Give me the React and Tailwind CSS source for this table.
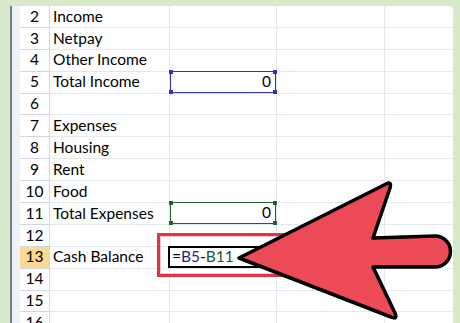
import React from 'react'

const rows = [
  { n: 2, label: 'Income' },
  { n: 3, label: 'Netpay' },
  { n: 4, label: 'Other Income' },
  { n: 5, label: 'Total Income', value: '0', sel: 'blue' },
  { n: 6, label: '' },
  { n: 7, label: 'Expenses' },
  { n: 8, label: 'Housing' },
  { n: 9, label: 'Rent' },
  { n: 10, label: 'Food' },
  { n: 11, label: 'Total Expenses', value: '0', sel: 'green' },
  { n: 12, label: '' },
  { n: 13, label: 'Cash Balance', edit: true },
  { n: 14, label: '' },
  { n: 15, label: '' },
  { n: 16, label: '' },
]

function Handles({ color }) {
  return (
    <>
      <span className={`absolute -left-[2px] -top-[2px] h-[4px] w-[4px] ${color}`} />
      <span className={`absolute -right-[2px] -top-[2px] h-[4px] w-[4px] ${color}`} />
      <span className={`absolute -left-[2px] -bottom-[2px] h-[4px] w-[4px] ${color}`} />
      <span className={`absolute -right-[2px] -bottom-[2px] h-[4px] w-[4px] ${color}`} />
    </>
  )
}

function ValueCell({ row }) {
  if (row.edit) {
    return (
      <div className="relative h-full border-r border-b border-[#e2e8ef]">
        <div className="absolute -left-[2px] -top-[1px] bottom-0 right-0 flex items-center border-2 border-black bg-white pl-[2px]">
          <span>=</span>
          <span className="text-[#1c1c8a]">B5</span>
          <span>-</span>
          <span className="text-[#1d5a22]">B11</span>
        </div>
      </div>
    )
  }
  if (row.sel) {
    const border = row.sel === 'blue' ? 'border-[#3030b8]' : 'border-[#23602d]'
    const fill = row.sel === 'blue' ? 'bg-[#3030b8]' : 'bg-[#23602d]'
    return (
      <div className="relative h-full border-r border-b border-[#e2e8ef]">
        <div className={`absolute -top-[1px] left-0 right-0 bottom-0 flex items-center justify-end border-[1.5px] ${border} pr-[4px]`}>
          {row.value}
          <Handles color={fill} />
        </div>
      </div>
    )
  }
  return <div className="h-full border-r border-b border-[#e2e8ef]" />
}

export default function App() {
  return (
    <div
      className="relative flex h-[323px] w-[460px] overflow-hidden bg-[#d6e9c9] pt-[6px] text-[15.5px] text-black"
      style={{ fontFamily: 'Lato, "Liberation Sans", sans-serif' }}
    >
      {/* window edge on the left */}
      <div className="w-[10px]" />
      <div className="w-[2px] bg-[#6e7d8c]" />
      <div className="w-[8px] bg-[#eef2f5]" />

      {/* sheet */}
      <div className="w-[433px] rounded-tr-[3px] bg-white">
        {rows.map((row) => (
          <div
            key={row.n}
            className="grid h-[21.9px] grid-cols-[30px_120px_107px_108px_68px] leading-none"
          >
            <div
              className={`flex items-center justify-center border-r border-b border-[#cfd8e2] ${
                row.n === 13 ? 'bg-[#f8d996]' : 'bg-white'
              }`}
            >
              {row.n}
            </div>
            <div className="flex items-center border-r border-b border-[#e2e8ef] pl-[3px]">
              {row.label}
            </div>
            <ValueCell row={row} />
            <div className="border-r border-b border-[#e2e8ef]" />
            <div className="border-b border-[#e2e8ef]" />
          </div>
        ))}
      </div>
      <div className="flex-1" />

      {/* highlight around the edited cell */}
      <div className="pointer-events-none absolute left-[157px] top-[233px] h-[44px] w-[150px] border-[3px] border-[#dc3644] shadow-[inset_0_0_0_1px_#f7c5c9]" />

      {/* pointer arrow */}
      <svg className="pointer-events-none absolute inset-0" width="460" height="323" viewBox="0 0 460 323">
        <path
          d="M239 258 L386 184 Q392 181 390 188 L373 238 L435 236 A15.5 15.5 0 0 1 435 267 L373 267 L395 313 Q398 320 391 317 Z"
          fill="#ec4a57"
          stroke="#000"
          strokeWidth="3.5"
          strokeLinejoin="round"
        />
      </svg>
    </div>
  )
}
